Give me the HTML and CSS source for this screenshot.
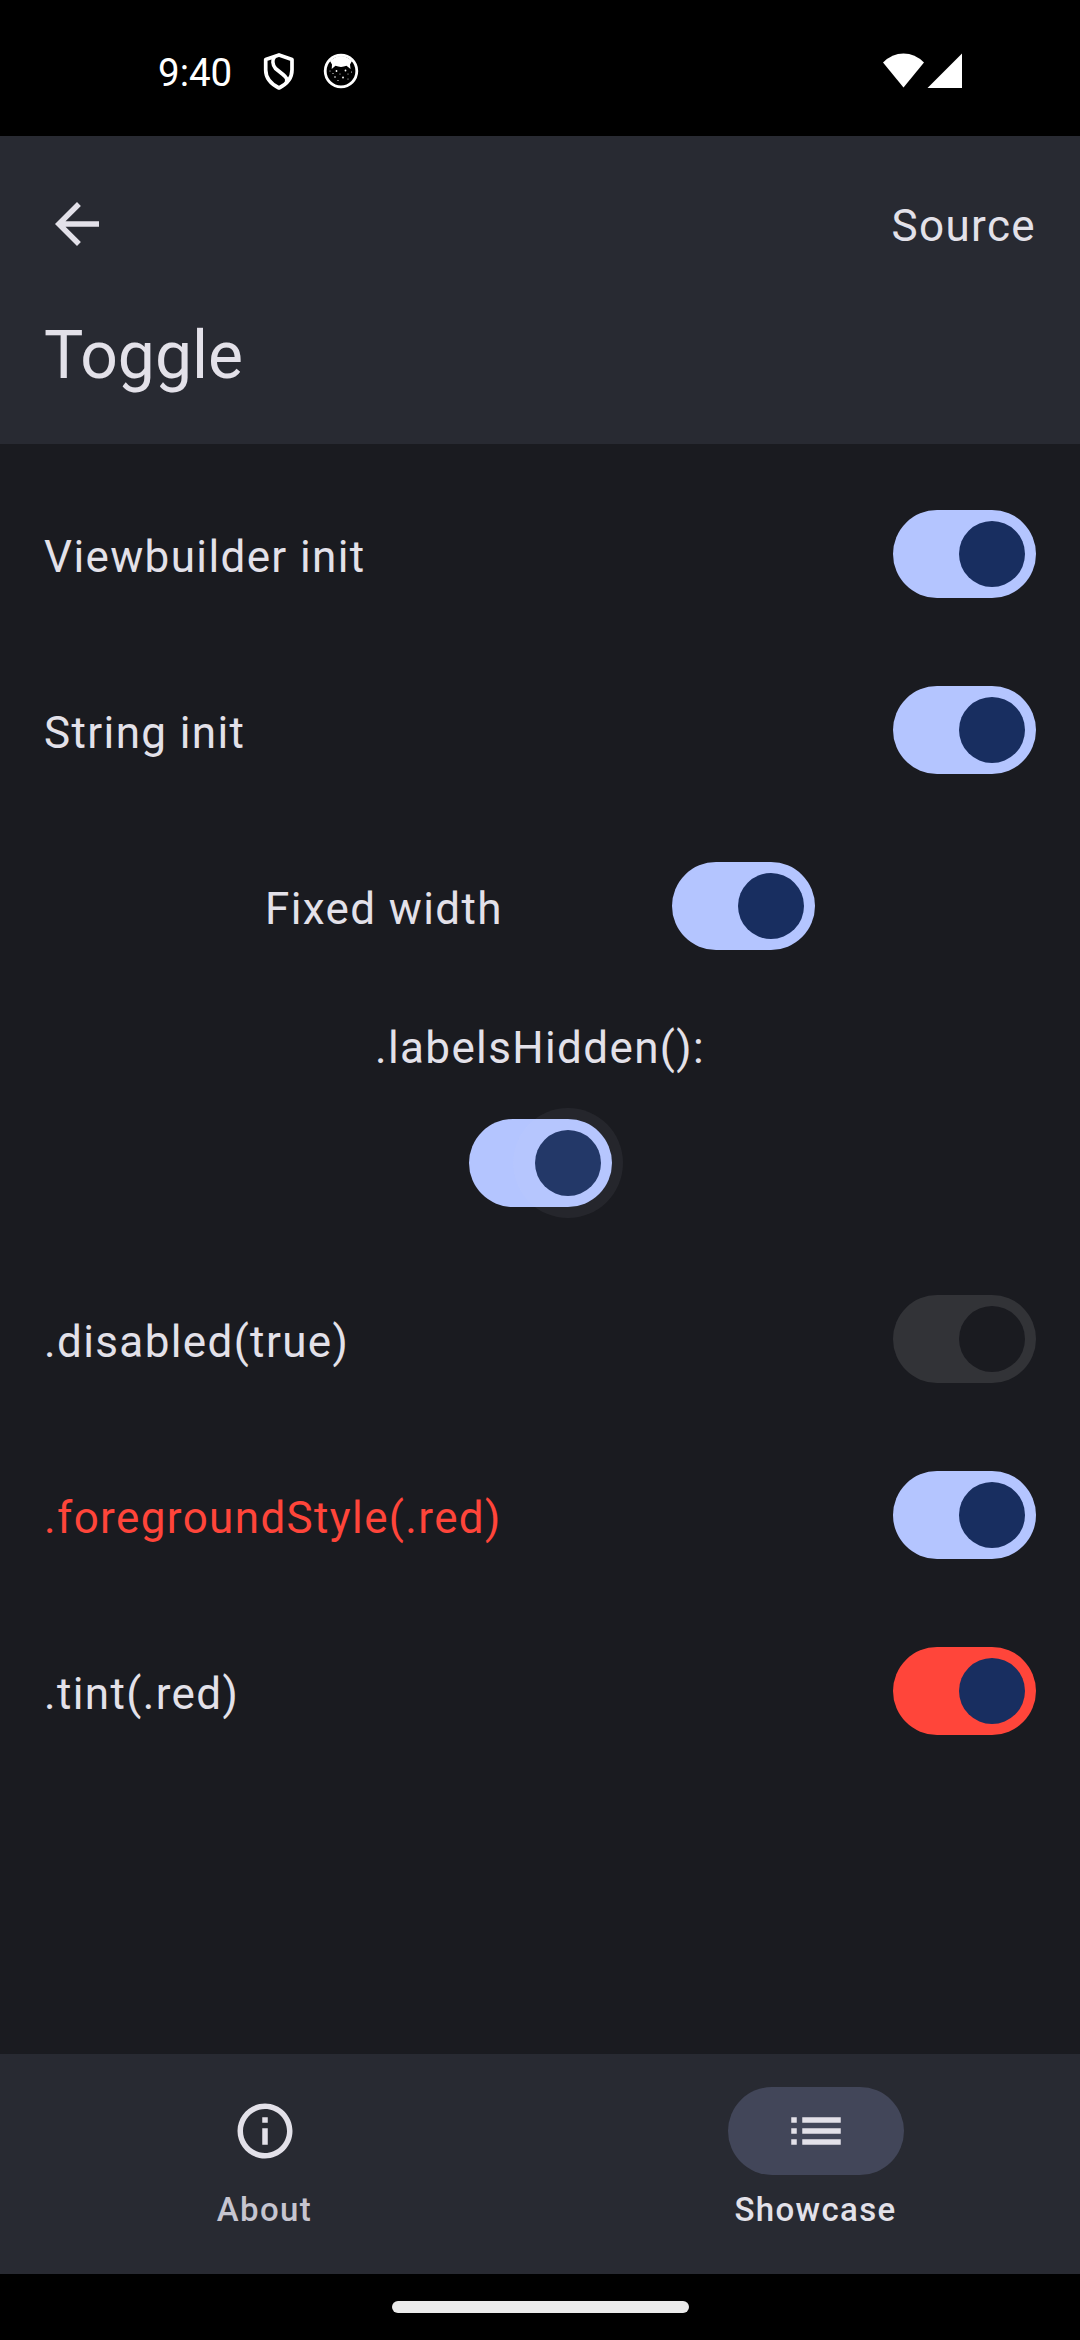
FILE: index.html
```html
<!DOCTYPE html>
<html lang="en">
<head>
<meta charset="utf-8">
<title>Toggle</title>
<link rel="stylesheet" href="styles.css">
</head>
<body>
<div class="screen">
  <div class="status">
    <div class="status-left">
      <span class="clock">9:40</span>
      <svg class="shield" width="32" height="38" viewBox="0 0 32 38" fill="none" stroke="#fff" stroke-width="3.700" stroke-linejoin="round">
        <path d="M16 1.900 L29 6.500 V17 C29 25 24 31 16 35 C8 31 2.700 25 2.700 17 V6.500 Z"/>
        <path d="M12 3 C9 7 9.500 12 12.500 15.500 L20 21.500 C23.500 24.500 24.500 26 23.500 29"/>
      </svg>
      <svg class="cat" width="36" height="36" viewBox="0 0 36 36">
        <circle cx="18" cy="18" r="15.800" fill="none" stroke="#fff" stroke-width="2.800"/>
        <path d="M7 8 Q18 -2 29 8 L27 11.500 L27.500 16 L23.500 12.800 Q18 15 12.500 12.800 L8.700 16 L9 11.500 Z" fill="#fff"/>
        <g fill="#fff">
          <circle cx="13.500" cy="18" r=".9"/><circle cx="22.500" cy="17.500" r=".9"/>
          <circle cx="7" cy="18" r=".5"/><circle cx="10" cy="20.500" r=".6"/><circle cx="17" cy="21" r=".5"/>
          <circle cx="20" cy="24.500" r=".9"/><circle cx="12" cy="24" r=".8"/><circle cx="25" cy="21" r=".5"/>
          <circle cx="28.500" cy="19" r=".5"/><circle cx="15" cy="27.500" r=".6"/><circle cx="25" cy="26" r=".5"/>
        </g>
      </svg>
    </div>
    <svg class="signal" width="80" height="36" viewBox="0 0 80 36" fill="#fff">
      <path d="M0 9.500 Q9 0.500 20.500 0.500 T41 9.500 L20.500 34.500 Z"/>
      <path d="M79 0.500 V35 H44.500 Z"/>
    </svg>
  </div>

  <header class="header">
    <div class="toolbar">
      <svg class="icon" viewBox="0 0 24 24"><path d="M20 11H7.830l5.590-5.590L12 4l-8 8 8 8 1.410-1.410L7.830 13H20v-2z"/></svg>
      <span class="source">Source</span>
    </div>
    <h1 class="title">Toggle</h1>
  </header>

  <main class="content">
    <div class="row"><span class="label">Viewbuilder init</span><span class="switch"><span class="thumb"></span></span></div>
    <div class="row"><span class="label">String init</span><span class="switch"><span class="thumb"></span></span></div>
    <div class="row row-fixed"><span class="label">Fixed width</span><span class="switch"><span class="thumb"></span></span></div>
    <div class="stack"><span class="label">.labelsHidden():</span><span class="switch pressed"><span class="thumb"></span></span></div>
    <div class="row"><span class="label">.disabled(true)</span><span class="switch disabled"><span class="thumb"></span></span></div>
    <div class="row"><span class="label red">.foregroundStyle(.red)</span><span class="switch"><span class="thumb"></span></span></div>
    <div class="row"><span class="label">.tint(.red)</span><span class="switch tinted"><span class="thumb"></span></span></div>
  </main>

  <nav class="tabs">
    <div class="tab">
      <span class="pill"><svg class="icon" viewBox="0 0 24 24"><path d="M11 7h2v2h-2zm0 4h2v6h-2zm1-9C6.480 2 2 6.480 2 12s4.480 10 10 10 10-4.480 10-10S17.520 2 12 2zm0 18c-4.410 0-8-3.590-8-8s3.590-8 8-8 8 3.590 8 8-3.590 8-8 8z"/></svg></span>
      <span class="tab-label">About</span>
    </div>
    <div class="tab active">
      <span class="pill"><svg class="icon" viewBox="0 0 24 24"><path d="M3 13h2v-2H3v2zm0 4h2v-2H3v2zm0-8h2V7H3v2zm4 4h14v-2H7v2zm0 4h14v-2H7v2zM7 7v2h14V7H7z"/></svg></span>
      <span class="tab-label">Showcase</span>
    </div>
  </nav>
  <div class="gesture"><span class="handle"></span></div>
</div>
</body>
</html>
```
FILE: styles.css
```css
* { box-sizing: border-box; }

body {
  margin: 0;
  background: #000;
  color: #e3e1e9;
  font-family: Roboto, sans-serif;
}

.screen {
  display: flex;
  flex-direction: column;
  width: 1080px;
  height: 2340px;
  background: #1a1b20;
}

.status {
  display: flex;
  justify-content: space-between;
  align-items: flex-start;
  height: 136px;
  padding: 52px 118px 0 158px;
  background: #000;
}

.status-left { display: flex; }

.clock {
  width: 74px;
  margin-top: -2px;
  color: #fff;
  font-size: 38.5px;
  line-height: 45px;
}

.shield { margin: 1px 0 0 31px; }
.cat { margin: 1px 0 0 28px; }
.signal { margin: 1px -1px 0 0; }
.icon { width: 66px; height: 66px; fill: #e3e1e9; }

.header {
  height: 308px;
  padding: 0 44px;
  background: #282a32;
}

.toolbar {
  display: flex;
  justify-content: space-between;
  align-items: center;
  height: 176px;
}

.source,
.label {
  padding-top: 5px;
  font-size: 44px;
  line-height: 66px;
  letter-spacing: 1.375px;
}

.source { padding-top: 3px; }

.title {
  margin: 0;
  font-size: 66px;
  font-weight: 400;
  line-height: 88px;
}

.content { flex: 1; padding: 22px 44px 0; }

.row {
  display: flex;
  justify-content: space-between;
  align-items: center;
  height: 176px;
}

.row-fixed { width: 550px; margin: 0 auto; }

.stack {
  display: flex;
  flex-direction: column;
  align-items: center;
  gap: 38px;
  height: 257px;
  padding-top: 21px;
}

.stack .label { padding-top: 0; }

.red { color: #ff453a; }

.switch {
  display: flex;
  justify-content: flex-end;
  align-items: center;
  width: 143px;
  height: 88px;
  padding-right: 11px;
  border-radius: 44px;
  background: #b4c5ff;
}

.thumb {
  width: 66px;
  height: 66px;
  border-radius: 50%;
  background: #182e60;
}

.disabled { background: #323337; }
.disabled .thumb { background: #1a1b20; }
.tinted { background: #ff453a; }

.pressed { position: relative; }

/* Touch ripple centred on the thumb */
.pressed::after {
  content: "";
  position: absolute;
  top: -11px;
  right: -11px;
  width: 110px;
  height: 110px;
  border-radius: 50%;
  background: rgba(227, 225, 233, 0.06);
}

.tabs {
  display: flex;
  gap: 22px;
  height: 220px;
  background: #282a32;
}

.tab {
  flex: 1;
  display: flex;
  flex-direction: column;
  align-items: center;
  padding-top: 33px;
}

.pill {
  display: flex;
  justify-content: center;
  align-items: center;
  width: 176px;
  height: 88px;
  border-radius: 44px;
}

.active .pill { background: #424659; }

.tab-label {
  margin-top: 13px;
  color: #c6c5d0;
  font-size: 33px;
  font-weight: 500;
  line-height: 44px;
  letter-spacing: 1.375px;
}

.active .tab-label { color: #e3e1e9; }

.gesture {
  display: flex;
  justify-content: center;
  height: 66px;
  padding-top: 27px;
  background: #000;
}

.handle {
  width: 297px;
  height: 12px;
  border-radius: 6px;
  background: #ebebeb;
}
```
